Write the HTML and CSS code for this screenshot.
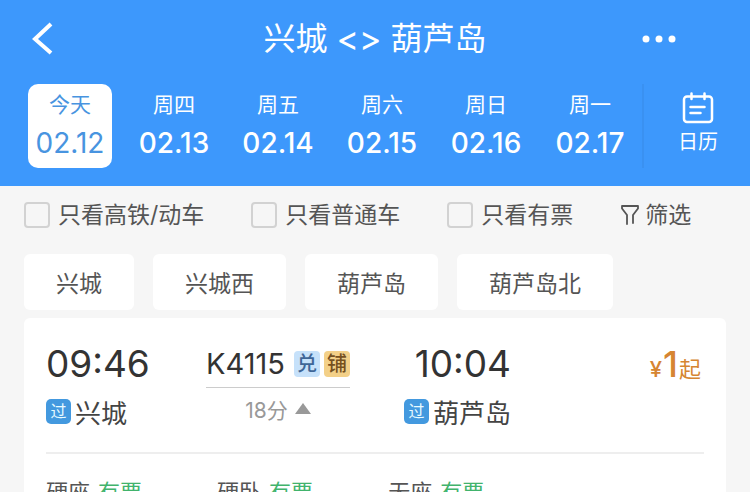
FILE: index.html
```
<!DOCTYPE html>
<html lang="zh-CN">
<head>
<meta charset="utf-8">
<meta name="viewport" content="width=device-width, initial-scale=1">
<title>兴城 - 葫芦岛</title>
<link rel="stylesheet" href="styles.css">
</head>
<body>
<div class="app">
  <header class="header">
    <div class="titlebar">
      <button class="back" type="button" aria-label="返回">
        <svg width="24" height="34" viewBox="0 0 24 34" fill="none" stroke="currentColor" stroke-width="4"><path d="M21 2 5 17 21 31"/></svg>
      </button>
      <h1 class="title"><span>兴城</span><span class="swap">&lt;&gt;</span><span>葫芦岛</span></h1>
      <button class="more" type="button" aria-label="更多">
        <svg width="34" height="8" viewBox="0 0 34 8" fill="currentColor"><circle cx="4" cy="4" r="3.500"/><circle cx="17" cy="4" r="3.500"/><circle cx="30" cy="4" r="3.500"/></svg>
      </button>
    </div>
    <nav class="dates">
      <div class="date-list">
        <button class="date date-active" type="button"><span class="day">今天</span><span class="num">02.12</span></button>
        <button class="date" type="button"><span class="day">周四</span><span class="num">02.13</span></button>
        <button class="date" type="button"><span class="day">周五</span><span class="num">02.14</span></button>
        <button class="date" type="button"><span class="day">周六</span><span class="num">02.15</span></button>
        <button class="date" type="button"><span class="day">周日</span><span class="num">02.16</span></button>
        <button class="date" type="button"><span class="day">周一</span><span class="num">02.17</span></button>
      </div>
      <button class="calendar" type="button">
        <svg width="32" height="32" viewBox="0 0 32 32" fill="none" stroke="currentColor" stroke-width="2.500" stroke-linecap="round"><path d="M5 4.500a3 3 0 0 0-3 3V27a3 3 0 0 0 3 3h22a3 3 0 0 0 3-3V7.500a3 3 0 0 0-3-3ZM9.500 1.500V7M22.500 1.500V7M8.500 15h14M8.500 21h10"/></svg>
        <span>日历</span>
      </button>
    </nav>
  </header>

  <main class="content">
    <form class="filters">
      <label class="check"><input type="checkbox">只看高铁/动车</label>
      <label class="check"><input type="checkbox">只看普通车</label>
      <label class="check"><input type="checkbox">只看有票</label>
      <button class="filter" type="button">
        <svg width="20" height="22" viewBox="0 0 20 22" fill="none" stroke="currentColor" stroke-width="1.800" stroke-linejoin="round" stroke-linecap="round"><path d="M7 20V11L2 4.500V2H18v2.500L13 11V19"/></svg>
        <span>筛选</span>
      </button>
    </form>

    <div class="stations">
      <button class="chip" type="button">兴城</button>
      <button class="chip" type="button">兴城西</button>
      <button class="chip" type="button">葫芦岛</button>
      <button class="chip" type="button">葫芦岛北</button>
    </div>

    <article class="card">
      <div class="trip">
        <div class="stop">
          <div class="time">09:46</div>
          <div class="station"><span class="pass">过</span>兴城</div>
        </div>
        <div class="train">
          <div class="train-top"><span class="train-no">K4115</span><span class="tag tag-blue">兑</span><span class="tag tag-gold">铺</span></div>
          <div class="duration">18分<svg width="16" height="12" viewBox="0 0 16 12" fill="currentColor"><path d="M8 0 16 11H0Z"/></svg></div>
        </div>
        <div class="stop stop-end">
          <div class="time">10:04</div>
          <div class="station"><span class="pass">过</span>葫芦岛</div>
        </div>
        <div class="price"><span class="yen">¥</span><span class="amount">1</span><span class="from">起</span></div>
      </div>
      <ul class="seats">
        <li>硬座<span class="available">有票</span></li>
        <li>硬卧<span class="available">有票</span></li>
        <li>无座<span class="available">有票</span></li>
      </ul>
    </article>
  </main>
</div>
</body>
</html>
```
FILE: styles.css
```
* { box-sizing: border-box; }

body {
  margin: 0;
  background: #f6f6f6;
  color: #333;
  font-family: Inter, "Noto Sans CJK SC", sans-serif;
}

button {
  margin: 0;
  padding: 0;
  border: 0;
  background: none;
  color: inherit;
  font: inherit;
}

svg { display: block; }

.app {
  height: 100vh;
  overflow: hidden;
}

.header {
  padding: 0 24px 18px;
  background: #3d98fc;
  color: #fff;
}

.titlebar {
  display: grid;
  grid-template-columns: 84px 1fr 84px;
  align-items: center;
  height: 84px;
  padding-bottom: 6px;
}

.back { padding-left: 6px; justify-self: start; }
.more { justify-self: start; }

.title {
  display: flex;
  align-items: center;
  justify-content: center;
  gap: 9px;
  margin: 0;
  font-size: 32px;
  font-weight: 400;
  line-height: 40px;
}

.swap { font-size: 34px; }

.dates {
  display: flex;
  justify-content: space-between;
  padding: 0 4px;
}

.date-list { display: flex; gap: 20px; }

.date {
  display: flex;
  flex-direction: column;
  align-items: center;
  width: 84px;
  height: 84px;
  padding-top: 7px;
  border-radius: 10px;
}

.date-active {
  background: #fff;
  color: #4894e0;
}

.day { font-size: 21px; line-height: 28px; }
.num { font-size: 28px; line-height: 48px; font-weight: 500; }
.date-active .num { font-weight: 400; }

.calendar {
  display: flex;
  flex-direction: column;
  align-items: center;
  gap: 3px;
  padding: 8px 4px 0 34px;
  border-left: 2px solid #3a91f1;
  font-size: 20px;
  line-height: 30px;
}

.content { padding: 16px 24px 0; }

.filters {
  display: flex;
  align-items: center;
  gap: 47px;
  height: 26px;
  color: #555;
  font-size: 23px;
  line-height: 26px;
  white-space: nowrap;
}

.check, .filter {
  display: flex;
  align-items: center;
  gap: 8px;
}

.filter { gap: 5px; }

.check input {
  appearance: none;
  flex: none;
  width: 26px;
  height: 26px;
  margin: 0;
  border: 2px solid #d2d2d2;
  border-radius: 4px;
}

.stations {
  display: flex;
  gap: 19px;
  margin: 26px 0 8px;
}

.chip {
  height: 56px;
  padding: 0 32px;
  border-radius: 6px;
  background: #fff;
  color: #555;
  font-size: 23px;
}

.card {
  padding: 22px 22px 0;
  border-radius: 6px;
  background: #fff;
}

.trip {
  display: grid;
  grid-template-columns: 160fr 144fr 161fr 193fr;
  height: 114px;
  border-bottom: 2px solid #eee;
}

.stop-end { justify-self: end; text-align: right; }

.time { font-size: 37px; line-height: 48px; }

.station {
  display: flex;
  align-items: center;
  gap: 4px;
  height: 46px;
  font-size: 26px;
  color: #444;
}

.pass {
  width: 25px;
  height: 25px;
  border-radius: 5px;
  background: #4399df;
  color: #e8fbff;
  font-size: 16px;
  line-height: 24px;
  text-align: center;
}

.train-top {
  display: flex;
  align-items: center;
  gap: 4px;
  height: 48px;
  border-bottom: 1px solid #ccc;
}

.train-no { margin-right: auto; font-size: 29px; }

.tag {
  width: 26px;
  height: 26px;
  border-radius: 4px;
  font-size: 20px;
  font-weight: 500;
  line-height: 26px;
  text-align: center;
}

.tag-blue { background: #c6e1fa; color: #3f6697; }
.tag-gold { background: #f3d088; color: #76501f; }

.duration {
  display: flex;
  align-items: center;
  justify-content: center;
  gap: 7px;
  height: 42px;
  color: #999;
  font-size: 21px;
}

.price {
  display: flex;
  align-items: baseline;
  justify-content: flex-end;
  gap: 1px;
  padding-right: 3px;
  color: #d68532;
  line-height: 48px;
}

.yen { font-size: 22px; font-weight: 500; }
.amount { font-size: 36px; font-weight: 500; }
.from { font-size: 22px; }

.seats {
  display: flex;
  margin: 0;
  padding: 24px 0 20px;
  list-style: none;
  color: #555;
  font-size: 22px;
  line-height: 28px;
}

.seats li { display: flex; gap: 8px; width: 26%; }
.available { color: #41b36c; }
```
